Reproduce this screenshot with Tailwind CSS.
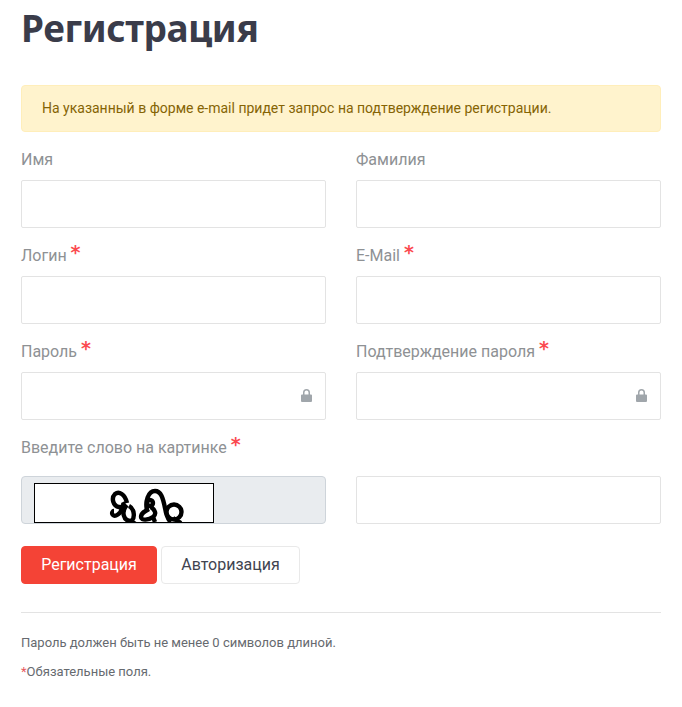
<!DOCTYPE html>
<html lang="ru">
<head>
<meta charset="utf-8">
<script src="https://cdn.jsdelivr.net/npm/@tailwindcss/browser@4"></script>
</head>
<body class="bg-white font-['Roboto',sans-serif] overflow-hidden">
<div class="w-[682px] h-[707px] pl-[21px] pr-[21px]">
  <h1 class="font-['Noto_Sans',sans-serif] font-bold text-[37px] tracking-[-0.4px] leading-[46px] text-[#3a3c4a] pt-[5px] h-[85px]">Регистрация</h1>
  <div class="h-[47px] rounded-[4px] bg-[#fff3cd] border border-[#ffeeba] text-[#856404] text-sm leading-[45px] pl-5 mb-4">На указанный в форме e-mail придет запрос на подтверждение регистрации.</div>
  <div class="grid grid-cols-[305px_305px] gap-x-[30px]">
    <div class="mb-4">
      <div class="h-6 mb-2 text-base leading-6 text-[#8e9194]">Имя</div>
      <div class="h-12 border border-[#e3e3e3] rounded-[2px] bg-white"></div>
    </div>
    <div class="mb-4">
      <div class="h-6 mb-2 text-base leading-6 text-[#8e9194]">Фамилия</div>
      <div class="h-12 border border-[#e3e3e3] rounded-[2px] bg-white"></div>
    </div>
    <div class="mb-4">
      <div class="h-6 mb-2 text-base leading-6 text-[#8e9194]">Логин <span class="font-['DejaVu_Sans'] font-bold text-[#fb4a50] text-[19px] leading-[0] align-[2px]">*</span></div>
      <div class="h-12 border border-[#e3e3e3] rounded-[2px] bg-white"></div>
    </div>
    <div class="mb-4">
      <div class="h-6 mb-2 text-base leading-6 text-[#8e9194]">E-Mail <span class="font-['DejaVu_Sans'] font-bold text-[#fb4a50] text-[19px] leading-[0] align-[2px]">*</span></div>
      <div class="h-12 border border-[#e3e3e3] rounded-[2px] bg-white"></div>
    </div>
    <div class="mb-4">
      <div class="h-6 mb-2 text-base leading-6 text-[#8e9194]">Пароль <span class="font-['DejaVu_Sans'] font-bold text-[#fb4a50] text-[19px] leading-[0] align-[2px]">*</span></div>
      <div class="h-12 border border-[#e3e3e3] rounded-[2px] bg-white flex items-center justify-end pr-[13px]">
        <svg width="11" height="13" viewBox="0 0 11 13" class="mt-[-1px]"><path fill="#a0a6ab" d="M1 5.5h1V3.5a3.5 3.5 0 0 1 7 0v2h1a1 1 0 0 1 1 1V12a1 1 0 0 1-1 1H1a1 1 0 0 1-1-1V6.500a1 1 0 0 1 1-1zm2.500 0h4V3.500a2 2 0 0 0-4 0z"/></svg>
      </div>
    </div>
    <div class="mb-4">
      <div class="h-6 mb-2 text-base leading-6 text-[#8e9194]">Подтверждение пароля <span class="font-['DejaVu_Sans'] font-bold text-[#fb4a50] text-[19px] leading-[0] align-[2px]">*</span></div>
      <div class="h-12 border border-[#e3e3e3] rounded-[2px] bg-white flex items-center justify-end pr-[13px]">
        <svg width="11" height="13" viewBox="0 0 11 13" class="mt-[-1px]"><path fill="#a0a6ab" d="M1 5.5h1V3.5a3.5 3.5 0 0 1 7 0v2h1a1 1 0 0 1 1 1V12a1 1 0 0 1-1 1H1a1 1 0 0 1-1-1V6.500a1 1 0 0 1 1-1zm2.500 0h4V3.500a2 2 0 0 0-4 0z"/></svg>
      </div>
    </div>
    <div class="col-span-2 h-6 mb-4 text-base leading-6 text-[#8e9194]">Введите слово на картинке <span class="font-['DejaVu_Sans'] font-bold text-[#fb4a50] text-[19px] leading-[0] align-[2px]">*</span></div>
    <div class="h-12 rounded-[4px] border border-[#ced4da] bg-[#e9ecef] pl-3 pt-[6px]">
      <svg width="180" height="40" viewBox="0 0 178 38" class="block bg-white border border-black">
        <g fill="none" stroke="#000" stroke-width="4.400">
          <path d="M92 19C90 10 84 7 80 10 76 14 78 22 84 23 88 24 89 20 88 18"/>
          <path d="M87 24C86 30 80 33 78 31 76 29 78 27 79 27"/>
          <path d="M92 21C86 27 88 37 96 37 100 35 100 25 94 22"/>
          <path d="M96 37L102 41"/>
          <path d="M112 26C110 18 113 7 120 7 126 7 128 14 130 24 131 30 133 36 136 38"/>
          <circle cx="115" cy="19" r="3"/>
          <path d="M116 23C120 26 122 30 118 33 114 36 106 37 106 33 106 29 110 27 114 25"/>
          <path d="M118 33L120 38"/>
          <circle cx="139" cy="28" r="7.500"/>
          <path d="M138 34L146 39"/>
        </g>
      </svg>
    </div>
    <div class="h-12 border border-[#e3e3e3] rounded-[2px] bg-white"></div>
  </div>
  <div class="flex gap-1 mt-[22px]">
    <div class="w-[136px] h-[38px] rounded-[4px] bg-[#f44336] border border-[#f44336] text-white text-base leading-[36px] text-center">Регистрация</div>
    <div class="w-[139px] h-[38px] rounded-[4px] bg-white border border-[#e9e9e9] text-[#3f4450] text-base leading-[36px] text-center">Авторизация</div>
  </div>
  <div class="h-px bg-[#e3e3e3] mt-7 mb-5"></div>
  <p class="text-[13px] leading-[19px] text-[#666a6f] mb-[10px]">Пароль должен быть не менее 0 символов длиной.</p>
  <p class="text-[13px] leading-[19px] text-[#666a6f]"><span class="text-[#e8585c]">*</span>Обязательные поля.</p>
</div>
</body>
</html>
